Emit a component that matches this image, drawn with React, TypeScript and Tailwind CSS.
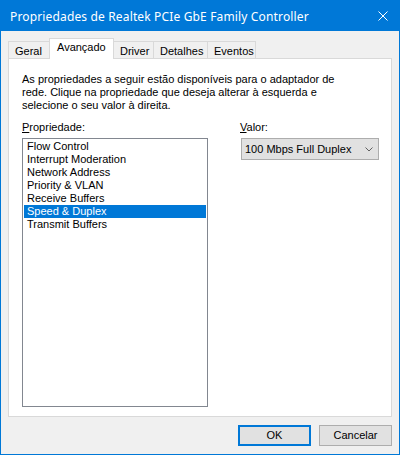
import React from 'react';

const tabs = [
  { label: 'Geral', width: 'w-[42px]' },
  { label: 'Avançado', width: 'w-[65px]', active: true },
  { label: 'Driver', width: 'w-[41px]' },
  { label: 'Detalhes', width: 'w-[55px]' },
  { label: 'Eventos', width: 'w-[49px]' },
];

const properties = [
  'Flow Control',
  'Interrupt Moderation',
  'Network Address',
  'Priority & VLAN',
  'Receive Buffers',
  'Speed & Duplex',
  'Transmit Buffers',
];

export default function App() {
  const selected = 'Speed & Duplex';

  return (
    <div className="w-[400px] h-[455px] flex flex-col border border-[#0078d7] bg-[#f0f0f0] text-[11px] leading-[13px] text-black font-['Liberation_Sans',Arial,sans-serif] overflow-hidden">
      {/* title bar */}
      <div className="h-[30px] shrink-0 bg-[#0078d7] flex items-center justify-between pl-[9px] pr-[10px] text-white">
        <span className="text-[12px] tracking-[0.15px] font-['Noto_Sans','Open_Sans',sans-serif]">
          Propriedades de Realtek PCIe GbE Family Controller
        </span>
        <svg width="10" height="10" viewBox="0 0 10 10" className="mr-[1px]">
          <path d="M0.5 0.5 L9.5 9.5 M9.5 0.5 L0.5 9.5" stroke="white" strokeWidth="1" />
        </svg>
      </div>

      <div className="flex flex-col pl-[7px] pr-[7px] pt-[7px]">
        {/* tab strip */}
        <div className="flex items-end h-[20px]">
          {tabs.map((t, i) => (
            <div
              key={t.label}
              className={
                t.active
                  ? `${t.width} -ml-px h-[21px] -mb-px relative z-10 bg-white border border-b-0 border-[#d9d9d9] pl-[7px] pt-[2px]`
                  : `${t.width} ${i === 0 ? '' : '-ml-px'} h-[17px] bg-[#f0f0f0] border border-b-0 border-[#d9d9d9] pl-[6px] pt-[3px]`
              }
            >
              {t.label}
            </div>
          ))}
        </div>

        {/* page */}
        <div className="w-[384px] h-[359px] bg-white border border-[#d9d9d9] pl-[13px] pt-[14px]">
          <p>
            As propriedades a seguir estão disponíveis para o adaptador de
            <br />
            rede. Clique na propriedade que deseja alterar à esquerda e
            <br />
            selecione o seu valor à direita.
          </p>

          <div className="flex gap-[32px] mt-[9px]">
            <div className="flex flex-col">
              <span>
                <span className="underline">P</span>ropriedade:
              </span>
              <div className="mt-[4px] w-[186px] h-[269px] border border-[#828790] p-px">
                {properties.map((p) => (
                  <div
                    key={p}
                    className={`h-[13px] pl-[3px] ${p === selected ? 'bg-[#0078d7] text-white' : ''}`}
                  >
                    {p}
                  </div>
                ))}
              </div>
            </div>

            <div className="flex flex-col">
              <span>
                <span className="underline">V</span>alor:
              </span>
              <div className="mt-[4px] ml-px w-[138px] h-[22px] bg-[#e1e1e1] border border-[#adadad] flex items-center justify-between pl-[3px] pr-[5px]">
                <span>100 Mbps Full Duplex</span>
                <svg width="8" height="5" viewBox="0 0 8 5">
                  <path d="M0.5 0.5 L4 4 L7.5 0.5" fill="none" stroke="#606060" strokeWidth="1" />
                </svg>
              </div>
            </div>
          </div>
        </div>

        {/* buttons */}
        <div className="flex justify-end gap-[8px] mt-[8px] w-[384px]">
          <button className="w-[73px] h-[21px] bg-[#e1e1e1] border-2 border-[#0078d7] text-[11px] leading-[13px]">
            OK
          </button>
          <button className="w-[73px] h-[21px] bg-[#e1e1e1] border border-[#adadad] text-[11px] leading-[13px]">
            Cancelar
          </button>
        </div>
      </div>
    </div>
  );
}
